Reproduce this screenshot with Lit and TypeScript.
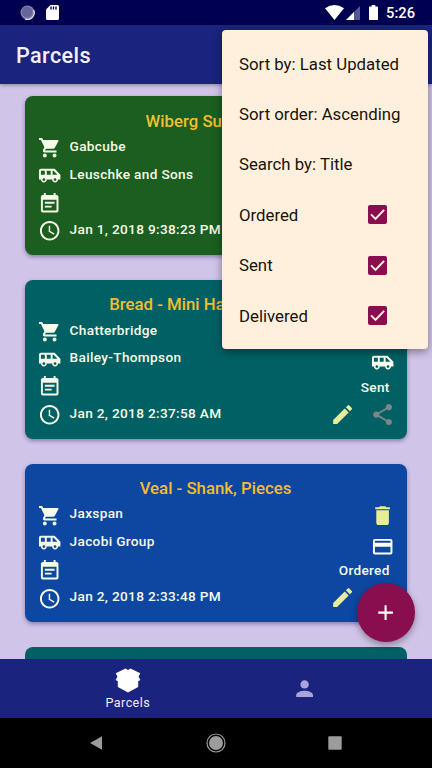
import { LitElement, html, css, svg } from "lit";
import { customElement, property } from "lit/decorators.js";

const ICONS: Record<string, string> = {
  cart: "M7 18c-1.1 0-1.99.9-1.99 2S5.9 22 7 22s2-.9 2-2-.9-2-2-2zM1 2v2h2l3.6 7.59-1.35 2.45c-.16.28-.25.61-.25.96 0 1.1.9 2 2 2h12v-2H7.42c-.14 0-.25-.11-.25-.25l.03-.12.9-1.63h7.45c.75 0 1.41-.41 1.75-1.03l3.58-6.49A1.003 1.003 0 0 0 20 4H5.21l-.94-2H1zm16 16c-1.1 0-1.99.9-1.99 2s.89 2 1.99 2 2-.9 2-2-.9-2-2-2z",
  shuttle: "M17 5H3c-1.1 0-2 .89-2 2v9h2c0 1.65 1.34 3 3 3s3-1.35 3-3h5.5c0 1.65 1.34 3 3 3s3-1.35 3-3H23v-5l-6-6zM3 11V7h4v4H3zm3 6.5c-.83 0-1.5-.67-1.5-1.5s.67-1.5 1.5-1.5 1.5.67 1.5 1.5-.67 1.5-1.5 1.5zm7-6.5H9V7h4v4zm4.5 6.5c-.83 0-1.5-.67-1.5-1.5s.67-1.5 1.5-1.5 1.5.67 1.5 1.5-.67 1.5-1.5 1.5zM15 11V7h1l4 4h-5z",
  note: "M17 10H7v2h10v-2zm2-7h-1V1h-2v2H8V1H6v2H5c-1.11 0-1.99.9-1.99 2L3 19c0 1.1.89 2 2 2h14c1.1 0 2-.9 2-2V5c0-1.1-.9-2-2-2zm0 16H5V8h14v11zm-5-5H7v2h7v-2z",
  clock: "M11.99 2C6.47 2 2 6.48 2 12s4.47 10 9.99 10C17.52 22 22 17.52 22 12S17.52 2 11.99 2zM12 20c-4.42 0-8-3.58-8-8s3.58-8 8-8 8 3.58 8 8-3.58 8-8 8zm.5-13H11v6l5.25 3.15.75-1.23-4.5-2.67z",
  trash: "M6 19c0 1.1.9 2 2 2h8c1.1 0 2-.9 2-2V7H6v12zM19 4h-3.5l-1-1h-5l-1 1H5v2h14V4z",
  payment: "M20 4H4c-1.11 0-1.99.89-1.99 2L2 18c0 1.11.89 2 2 2h16c1.11 0 2-.89 2-2V6c0-1.11-.89-2-2-2zm0 14H4v-6h16v6zm0-10H4V6h16v2z",
  pencil: "M3 17.25V21h3.75L17.81 9.94l-3.75-3.75L3 17.25zM20.71 7.04a.996.996 0 0 0 0-1.41l-2.34-2.34a.996.996 0 0 0-1.41 0l-1.83 1.83 3.75 3.75 1.83-1.83z",
  share: "M18 16.08c-.76 0-1.44.3-1.96.77L8.91 12.7c.05-.23.09-.46.09-.7s-.04-.47-.09-.7l7.05-4.11c.54.5 1.25.81 2.04.81 1.66 0 3-1.34 3-3s-1.34-3-3-3-3 1.34-3 3c0 .24.04.47.09.7L8.04 9.81C7.5 9.31 6.79 9 6 9c-1.66 0-3 1.34-3 3s1.34 3 3 3c.79 0 1.5-.31 2.04-.81l7.12 4.16c-.05.21-.08.43-.08.65 0 1.61 1.31 2.92 2.92 2.92s2.92-1.31 2.92-2.92-1.31-2.92-2.92-2.92z",
  plus: "M19 13h-6v6h-2v-6H5v-2h6V5h2v6h6v2z",
  person: "M12 12c2.21 0 4-1.79 4-4s-1.79-4-4-4-4 1.79-4 4 1.79 4 4 4zm0 2c-2.67 0-8 1.34-8 4v2h16v-2c0-2.66-5.33-4-8-4z",
};

@customElement("app-icon")
class AppIcon extends LitElement {
  static styles = css`
    :host { display: block; width: 25.2px; height: 25.2px; flex: none; }
    svg { display: block; width: 100%; height: 100%; fill: currentColor; }
  `;
  @property() name = "cart";
  render() {
    return html`<svg viewBox="0 0 24 24">${svg`<path d=${ICONS[this.name]}></path>`}</svg>`;
  }
}

interface Parcel {
  title: string;
  shop: string;
  courier: string;
  updated: string;
  status: string;
  icon: string;
  tone: string;
}

const PARCELS: Parcel[] = [
  { title: "Wiberg Super Cure", shop: "Gabcube", courier: "Leuschke and Sons", updated: "Jan 1, 2018 9:38:23 PM", status: "Delivered", icon: "payment", tone: "green" },
  { title: "Bread - Mini Hamburger Bun", shop: "Chatterbridge", courier: "Bailey-Thompson", updated: "Jan 2, 2018 2:37:58 AM", status: "Sent", icon: "shuttle", tone: "teal" },
  { title: "Veal - Shank, Pieces", shop: "Jaxspan", courier: "Jacobi Group", updated: "Jan 2, 2018 2:33:48 PM", status: "Ordered", icon: "payment", tone: "blue" },
];

@customElement("parcel-card")
class ParcelCard extends LitElement {
  static styles = css`
    :host { display: block; flex: none; }
    .card {
      box-sizing: border-box; height: 158.6px; padding: 11.4px 12px 0 13px; border-radius: 8px;
      color: #f6fbe9; font-size: 13.65px; font-weight: 500; letter-spacing: 0.32px;
      box-shadow: 0 2px 4px rgba(40, 20, 80, 0.4);
    }
    .green { background: #1b5e20; }
    .teal { background: #006064; }
    .blue { background: #0d47a1; }
    .title { height: 26.4px; line-height: 26px; text-align: center; color: #f3bd30; font-size: 16.8px; letter-spacing: 0; white-space: nowrap; padding-right: 2px; }
    .body { display: flex; justify-content: space-between; }
    .row { display: flex; align-items: center; gap: 8.2px; height: 27.7px; white-space: nowrap; }
    .row app-icon { width: 23.4px; height: 23.4px; }
    .row span { padding-bottom: 4.2px; }
    .side { display: flex; flex-direction: column; align-items: flex-end; }
    .remove { height: 28.4px; display: flex; align-items: center; color: #e6ee9c; }
    .kind { height: 33.4px; display: flex; align-items: center; width: 25.2px; justify-content: center; color: #fffff0; }
    .kind app-icon { width: 23.4px; height: 23.4px; }
    .status { height: 14px; line-height: 14px; padding-right: 5.3px; }
    .actions { height: 41.8px; display: flex; align-items: center; gap: 14.8px; color: #e6ee9c; }
    .share { color: #7d8588; }
  `;
  @property({ attribute: false }) parcel!: Parcel;
  render() {
    const p = this.parcel;
    return html`<div class="card ${p.tone}">
      <div class="title">${p.title}</div>
      <div class="body">
        <div>
          <div class="row"><app-icon name="cart"></app-icon><span>${p.shop}</span></div>
          <div class="row"><app-icon name="shuttle"></app-icon><span>${p.courier}</span></div>
          <div class="row"><app-icon name="note"></app-icon></div>
          <div class="row"><app-icon name="clock"></app-icon><span>${p.updated}</span></div>
        </div>
        <div class="side">
          <div class="remove"><app-icon name="trash"></app-icon></div>
          <div class="kind"><app-icon name=${p.icon}></app-icon></div>
          <div class="status">${p.status}</div>
          <div class="actions"><app-icon name="pencil"></app-icon><app-icon class="share" name="share"></app-icon></div>
        </div>
      </div>
    </div>`;
  }
}

@customElement("app-root")
class AppRoot extends LitElement {
  static styles = css`
    :host {
      display: flex; flex-direction: column; position: relative; width: 432px; height: 768px; overflow: hidden;
      font-family: Roboto, "Liberation Sans", sans-serif; background: #d1c4e9;
    }
    .status { flex: none; box-sizing: border-box; height: 25px; background: #000051; display: flex; align-items: center; padding: 0 17px 0 20px; color: #fff; }
    .status svg { display: block; flex: none; }
    .sync { margin-right: 11px; }
    .fill { flex: 1; }
    .wifi { margin-right: 2px; }
    .signal { margin-right: 9px; }
    .battery { margin-right: 8px; }
    .time { font-size: 14.7px; font-weight: 500; line-height: 25px; padding-top: 1px; }
    .bar { flex: none; box-sizing: border-box; height: 59px; padding: 2px 0 0 16px; line-height: 57px; background: #1a237e; color: #f4f0fb; font-size: 21.6px; font-weight: 500; letter-spacing: 0.4px; box-shadow: 0 1px 4px rgba(0, 0, 0, 0.35); z-index: 1; }
    .list { flex: 1; min-height: 0; overflow: hidden; display: flex; flex-direction: column; gap: 25px; padding: 12.4px 25px 0; }
    .next { flex: none; height: 158.6px; border-radius: 8px; background: #006064; }
    .tabs { flex: none; height: 59px; background: #1a237e; display: flex; justify-content: center; z-index: 1; }
    .tab { width: 176.4px; display: flex; flex-direction: column; align-items: center; }
    .tab.active { color: #fff; padding-top: 8.5px; box-sizing: border-box; }
    .tab.idle { justify-content: center; color: #a9a5da; }
    .label { font-size: 12.6px; line-height: 16px; letter-spacing: 0.4px; padding-top: 2.2px; color: #f0ecfa; }
    .system { flex: none; height: 50px; background: #000; display: flex; justify-content: center; align-items: center; gap: 99px; }
    .menu {
      position: absolute; z-index: 3; left: 222px; top: 29.5px; width: 206px; height: 319.5px; box-sizing: border-box;
      padding: 9px 41px 0 17px; border-radius: 4px; background: #fff0de; color: #1a1208;
      font-size: 16.8px; box-shadow: 0 3px 8px rgba(0, 0, 0, 0.4);
    }
    .item { height: 50.4px; display: flex; align-items: center; justify-content: space-between; white-space: nowrap; }
    .box { display: block; width: 19px; height: 19px; flex: none; }
    .fab {
      position: absolute; z-index: 2; left: 356.5px; top: 583.4px; width: 58.8px; height: 58.8px; border-radius: 50%;
      background: #880e4f; color: #fff; display: flex; align-items: center; justify-content: center;
      box-shadow: 0 3px 7px rgba(0, 0, 0, 0.35);
    }
  `;

  private check() {
    return html`<svg class="box" viewBox="0 0 19 19"><rect width="19" height="19" rx="2" fill="#880e4f"></rect><path d="M3 9.4l4.5 4.5 8.6-9" fill="none" stroke="#fff0de" stroke-width="2"></path></svg>`;
  }

  render() {
    const options = ["Sort by: Last Updated", "Sort order: Ascending", "Search by: Title"];
    const filters = ["Ordered", "Sent", "Delivered"];
    return html`
      <div class="status">
        <svg class="sync" width="15" height="15" viewBox="0 0 15 15"><circle cx="7.5" cy="7.5" r="7" fill="#8583ae"></circle><path d="M13.6 5a6.6 6.6 0 0 1-8.6 8.9" fill="none" stroke="#e4e2ef" stroke-width="1.2"></path><circle cx="7" cy="7" r="5.4" fill="#66649a"></circle></svg>
        <svg width="13" height="15" viewBox="0 0 13 15"><path d="M4.5 0H11.5Q13 0 13 1.5V13.5Q13 15 11.5 15H1.5Q0 15 0 13.5V4.5Z" fill="#fff"></path><path d="M5 1.5v3M7.5 1.5v3M10 1.5v3" stroke="#000051" stroke-width="1.4"></path></svg>
        <div class="fill"></div>
        <svg class="wifi" width="19" height="15" viewBox="0 0 19 15"><path d="M0 3.2Q9.5-3.2 19 3.2L9.5 15Z" fill="#fff"></path></svg>
        <svg class="signal" width="14" height="14" viewBox="0 0 14 14"><path d="M14 0V14H0Z" fill="#57559a"></path><path d="M8 6V14H0Z" fill="#fff"></path></svg>
        <svg class="battery" width="9" height="15" viewBox="0 0 9 15"><path d="M2.7 0h3.6v1.5H8.2q.8 0 .8.8V14.2q0 .8-.8.8H.8Q0 15 0 14.2V2.3q0-.8.8-.8H2.7Z" fill="#fff"></path></svg>
        <div class="time">5:26</div>
      </div>
      <div class="bar">Parcels</div>
      <div class="list">
        ${PARCELS.map((p) => html`<parcel-card .parcel=${p}></parcel-card>`)}
        <div class="next"></div>
      </div>
      <div class="tabs">
        <div class="tab active">
          <svg width="26" height="25" viewBox="0 0 26 25"><path d="M10.5.4L13 1.9 15.5.4 25.3 5.2 23.6 8.6 25.3 12 23.2 13.2V19L13 24.4 2.8 19V13.2L.7 12 2.4 8.6.7 5.2Z" fill="#fff"></path></svg>
          <div class="label">Parcels</div>
        </div>
        <div class="tab idle"><app-icon name="person"></app-icon></div>
      </div>
      <div class="system">
        <svg width="20" height="20" viewBox="0 0 20 20"><path d="M15 3.2V16.8L3 10Z" fill="#9c9c9c"></path></svg>
        <svg width="20" height="20" viewBox="0 0 20 20"><circle cx="10" cy="10" r="9" fill="none" stroke="#9c9c9c" stroke-width="1.2"></circle><circle cx="10" cy="10" r="7" fill="#9c9c9c"></circle></svg>
        <svg width="20" height="20" viewBox="0 0 20 20"><rect x="3.3" y="3.3" width="13.4" height="13.4" rx="1" fill="#9c9c9c"></rect></svg>
      </div>
      <div class="fab"><app-icon name="plus"></app-icon></div>
      <div class="menu">
        ${options.map((o) => html`<div class="item">${o}</div>`)}
        ${filters.map((f) => html`<div class="item"><span>${f}</span>${this.check()}</div>`)}
      </div>
    `;
  }
}
